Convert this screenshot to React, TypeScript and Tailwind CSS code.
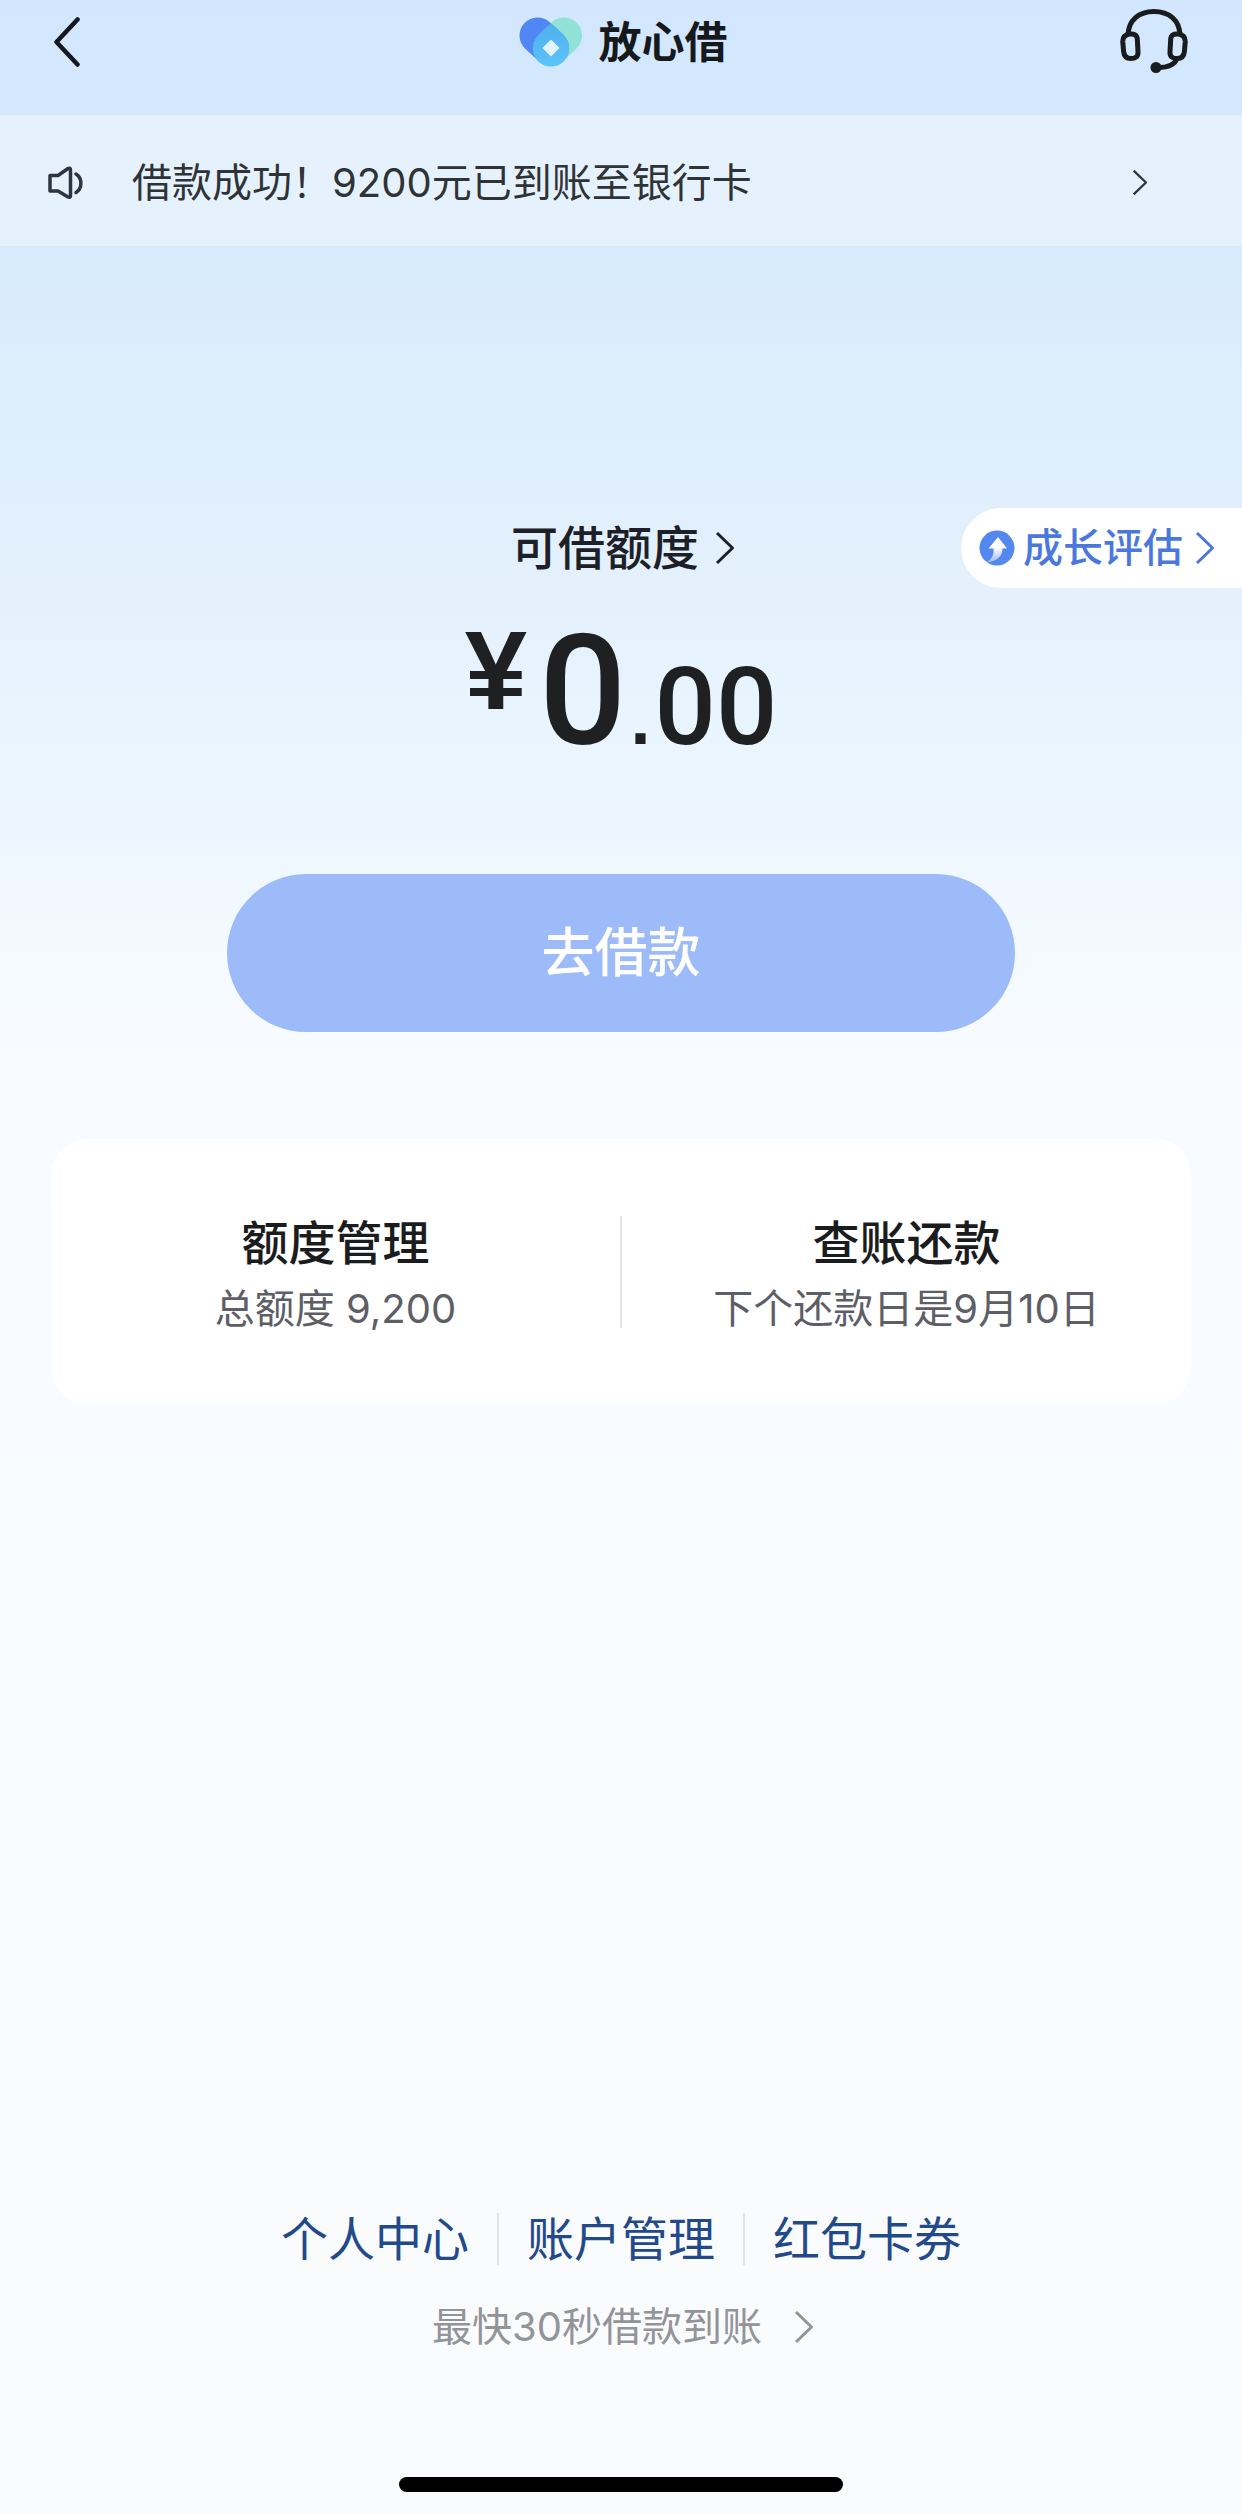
import type { ReactNode } from "react"

const footerLinks = ["个人中心", "账户管理", "红包卡券"]

function Chevron({ className }: { className: string }) {
  return (
    <svg viewBox="0 0 20 34" fill="none" stroke="currentColor" strokeWidth="3" className={className} aria-hidden="true">
      <path d="M2 2 17.5 17 2 32" strokeLinejoin="round" />
    </svg>
  )
}

function BrandLogo() {
  return (
    <svg viewBox="0 0 64 50" className="h-[50px] w-[64px]" aria-hidden="true">
      <defs>
        <linearGradient id="drop" x1="0" y1="0" x2="0" y2="1">
          <stop offset="0" stopColor="#4fb0ec" />
          <stop offset="1" stopColor="#5cc3fb" />
        </linearGradient>
      </defs>
      <path d="M45 18.5 32 31" stroke="#90e2d6" strokeWidth="36" strokeLinecap="round" />
      <path d="M18.5 18.5 32 31" stroke="#5087f4" strokeWidth="36" strokeLinecap="round" />
      <path d="M32 6.5C38 11 44 17 47 21A18.2 18.2 0 1 1 17 21C20 17 26 11 32 6.5Z" fill="url(#drop)" />
      <path d="M32 23.5 39.5 31 32 38.5 24.5 31Z" fill="#e3f4ff" stroke="#e3f4ff" strokeWidth="1.5" strokeLinejoin="round" />
    </svg>
  )
}

function HeadsetIcon() {
  return (
    <svg viewBox="0 0 68 66" fill="none" stroke="#191c1f" strokeWidth="5" className="h-[66px] w-[68px]" aria-hidden="true">
      <path d="M8 26C8.5 11 19 2.5 34 2.5S59.5 11 60 26" />
      <path d="M10 25C14 24.5 17 26 17.3 30L18 43C18.2 48 15 49.5 11 49.5C6.5 49.5 4 47 3.6 42.5L2.8 33C2.5 28 5.5 25.5 10 25Z" />
      <path d="M58 25C54 24.5 51 26 50.7 30L50 43C49.8 48 53 49.5 57 49.5C61.5 49.5 64 47 64.4 42.5L65.2 33C65.5 28 62.5 25.5 58 25Z" />
      <path d="M57 49.5C54.5 56.5 48 58.5 38 58.5" />
      <circle cx="36" cy="58.5" r="5.5" fill="#191c1f" stroke="none" />
    </svg>
  )
}

function SpeakerIcon() {
  return (
    <svg viewBox="0 0 36 34" fill="none" stroke="#30343f" strokeWidth="3.5" className="h-[34px] w-9" aria-hidden="true">
      <path d="M2 9.5H10L20 2.5Q22.5 1.5 22.5 4V29.5Q22.5 32 20 31L10 25H2Z" strokeLinejoin="round" />
      <path d="M28 8C34.5 12 34.5 22.5 28 26.5" strokeLinecap="round" />
    </svg>
  )
}

function GrowthIcon() {
  return (
    <svg viewBox="0 0 36 36" className="h-9 w-9" aria-hidden="true">
      <defs>
        <linearGradient id="arrow" x1="0" y1="0" x2="0" y2="1">
          <stop offset="0.4" stopColor="#fff" />
          <stop offset="1" stopColor="#fff" stopOpacity="0.45" />
        </linearGradient>
      </defs>
      <circle cx="18" cy="18" r="17.5" fill="#5288ef" />
      <path d="M19 7 28 18.5H23.5C23.5 27 17 31.5 8 32C13 29 15 25 14.5 18.5H9.5Z" fill="url(#arrow)" />
    </svg>
  )
}

function CardItem({ title, children }: { title: string; children: ReactNode }) {
  return (
    <a href="#" className="flex flex-1 flex-col items-center justify-center pt-2">
      <span className="text-[47px] leading-[66px] font-medium text-[#1b1c1e]">{title}</span>
      <span className="text-[40px] leading-[66px] text-[#5d5e66]">{children}</span>
    </a>
  )
}

export default function App() {
  return (
    <div className="flex min-h-screen flex-col bg-[linear-gradient(180deg,#d2e6fd_0px,#d5e9fd_200px,#d9ecfc_280px,#e1effc_500px,#e8f4fe_720px,#eff7ff_860px,#f7fbff_1020px,#f8fbff_1400px,#f9fbfc_1700px,#fafbfc_100%)] font-[Inter,'Noto_Sans_CJK_SC',sans-serif]">
      {/* Title bar */}
      <header className="grid h-[115px] grid-cols-[1fr_auto_1fr] items-center px-[54px] pb-8">
        <button type="button" aria-label="返回" className="justify-self-start">
          <svg viewBox="0 0 26 50" fill="none" stroke="#15181f" strokeWidth="4.5" className="h-[50px] w-[26px]" aria-hidden="true">
            <path d="M23.5 2.5 2.5 25 23.5 47.5" strokeLinecap="round" strokeLinejoin="round" />
          </svg>
        </button>
        <h1 className="flex items-center gap-4 pl-1">
          <BrandLogo />
          <span className="text-[43px] leading-[50px] font-bold text-[#16191c]">放心借</span>
        </h1>
        <button type="button" aria-label="客服" className="justify-self-end">
          <HeadsetIcon />
        </button>
      </header>

      {/* Notice */}
      <a href="#" className="flex h-[131px] items-center bg-[#e5f2fe] pt-1 pr-[94px] pl-12">
        <SpeakerIcon />
        <span className="ml-12 flex-1 text-[40px] leading-[60px] text-[#2f3336]">借款成功！9200元已到账至银行卡</span>
        <Chevron className="h-[27px] w-4 text-[#33363d]" />
      </a>

      <main className="pt-[262px]">
        {/* Available credit */}
        <div className="grid grid-cols-[1fr_auto_1fr] items-center">
          <a href="#" className="col-start-2 flex items-center gap-4 pl-1 text-[#1d2127]">
            <span className="text-[47px] leading-[66px] font-medium">可借额度</span>
            <Chevron className="h-[34px] w-5" />
          </a>
          <a href="#" className="flex h-20 items-center justify-self-end rounded-l-full bg-white pr-[27px] pl-[18px] text-[#4b78dd]">
            <GrowthIcon />
            <span className="ml-2 text-[40px] leading-[60px] font-medium">成长评估</span>
            <Chevron className="ml-3 h-[34px] w-5" />
          </a>
        </div>

        <div className="mt-[27px] flex items-start justify-center gap-3 font-[Roboto,sans-serif] font-medium text-[#1f2021]">
          <span className="font-['Liberation_Sans',sans-serif] text-[112px] leading-[112px] font-bold">¥</span>
          <span className="flex items-baseline">
            <span className="text-[154px] leading-[154px]">0</span>
            <span className="mx-1 font-['Liberation_Sans',sans-serif] text-[72px] leading-[72px] font-bold">.</span>
            <span className="text-[108px] leading-[108px]">00</span>
          </span>
        </div>

        <div className="mt-[105px] px-[227px]">
          <button type="button" className="h-[158px] w-full rounded-full bg-[#9ebbf9] text-[53px] leading-[80px] font-medium text-white">
            去借款
          </button>
        </div>

        <section className="mx-[51px] mt-[107px] flex h-[265px] items-center rounded-[36px] bg-white">
          <CardItem title="额度管理">总额度 9,200</CardItem>
          <div className="h-28 w-0.5 bg-[#e3e4e6]" />
          <CardItem title="查账还款">下个还款日是9月10日</CardItem>
        </section>
      </main>

      <footer className="mt-auto flex flex-col items-center pt-20 pb-[23px]">
        <nav className="flex items-center divide-x-2 divide-[#dfe2e6]">
          {footerLinks.map((label) => (
            <a key={label} href="#" className="px-7 text-[47px] leading-[52px] text-[#224a8b]">
              {label}
            </a>
          ))}
        </nav>
        <a href="#" className="mt-8 flex items-center gap-8 pl-1 text-[#939499]">
          <span className="text-[40px] leading-[60px]">最快30秒借款到账</span>
          <Chevron className="h-[34px] w-5" />
        </a>
        {/* Home indicator */}
        <div className="mt-[120px] h-[15px] w-[444px] rounded-full bg-black" />
      </footer>
    </div>
  )
}
